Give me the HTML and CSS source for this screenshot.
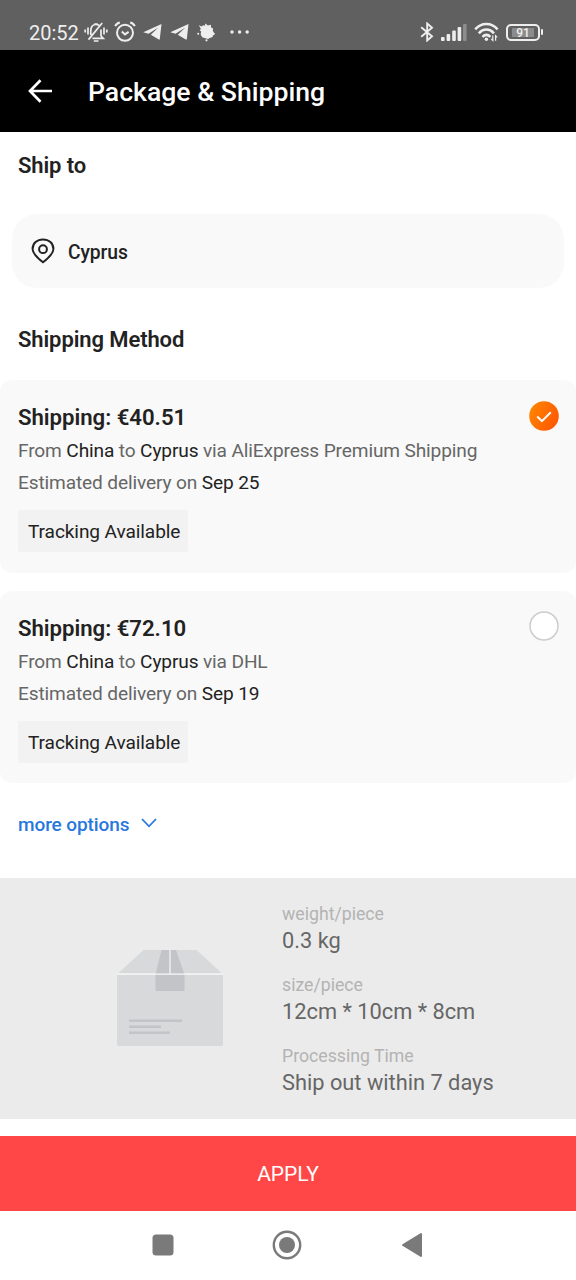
FILE: index.html
```html
<!DOCTYPE html>
<html lang="en">
<head>
<meta charset="utf-8">
<title>Package &amp; Shipping</title>
<link rel="stylesheet" href="styles.css">
</head>
<body>
<div class="status">
  <span class="clock">20:52</span>
  <svg class="i-bell" width="24" height="22" viewBox="0 0 24 22" fill="none" stroke="#eee" stroke-width="1.7">
    <path d="M6.800 14V9.500C7 5.500 8.600 3.500 12 3.500c1.500 0 2.500.4 3.300 1.100M17 8.500v6.500l2.300 2.400H8.500M10.200 3.200h3.600M4.500 18.600 18.200 2M9.800 20h4.700M4 6.500v7M1.200 8.500v3M20 6.500v7M22.800 8.500v3"/>
  </svg>
  <svg class="i-alarm" width="22" height="22" viewBox="0 0 22 22" fill="none" stroke="#eee" stroke-width="2">
    <circle cx="11" cy="11.800" r="8"/><path d="M7.800 10.500l3.200 2.900 3.600-2.500M1.200 5.200c.8-2 2.400-3.300 4.600-3.800M20.800 5.200c-.8-2-2.400-3.300-4.600-3.800"/>
  </svg>
  <svg class="i-plane" width="19" height="18" viewBox="0 0 19 18" fill="#eee"><path d="M18.500 1 .3 9.200l5.200 1.600L15.400 4.600 7.800 11.700l8 4.900q.8.300 1-.5z"/></svg>
  <svg class="i-plane" width="19" height="18" viewBox="0 0 19 18" fill="#eee"><path d="M18.500 1 .3 9.200l5.200 1.600L15.400 4.600 7.800 11.700l8 4.900q.8.300 1-.5z"/></svg>
  <svg class="i-leaf" width="19" height="19" viewBox="0 0 19 19" fill="#eee"><path d="M1.800 2.200 4.800 3.400 6 2.300 7.700 2.800 8.500.6l2.300 1.800 3-.6.3 2.800 2 .9-.3 2.300 1.600 2.600-1.400.9-.4 2.600-2.800 1-1.800 1-2.600-.7-3.200-1-1.600-3 .6-2.600-1.400-1.200 1-1.600z"/><circle cx="9.500" cy="17.300" r="1.100"/><circle cx="1.200" cy="10.700" r="1"/><path d="m14.500 9.500 3.500.8-1 2-3-.5z"/></svg>
  <svg class="i-dots" width="20" height="4" viewBox="0 0 20 4" fill="#eee"><circle cx="2" cy="2" r="1.700"/><circle cx="9.600" cy="2" r="1.700"/><circle cx="17.200" cy="2" r="1.700"/></svg>
  <div class="status-right">
    <svg width="14" height="20" viewBox="0 0 14 20" fill="none" stroke="#eee" stroke-width="1.900"><path d="M1.200 5.200 12 14.300 7.200 18.500V1.500L12 5.700 1.200 14.800"/></svg>
    <svg class="i-signal" width="26" height="17" viewBox="0 0 26 17" fill="#eee"><rect x="0" y="13" width="3.600" height="4" rx="1"/><rect x="5.600" y="10" width="3.600" height="7" rx="1"/><rect x="11.200" y="6.500" width="3.600" height="10.500" rx="1"/><rect x="16.600" y="3" width="3.600" height="14" rx="1"/><rect x="22" y="0" width="3.600" height="17" rx="1" fill="#8d8d8d"/></svg>
    <svg class="i-wifi" width="25" height="20" viewBox="0 0 25 20" fill="none" stroke="#eee" stroke-width="2.500"><path d="M1.200 7.300c6.200-7 16.200-7 22.400 0M4.800 11.300c4.400-5 10.800-5 15.200 0M8.400 14.800c2.500-2.500 5.500-2.500 8 0"/><circle cx="12.400" cy="17.200" r="1.700" fill="#eee" stroke="none"/><path stroke-width="1.200" d="M18.800 13.500v5l-1.600-1.600M21.600 18.700v-5l1.600 1.600"/></svg>
    <div class="battery"><span>91</span></div><i class="battery-cap"></i>
  </div>
</div>
<header class="header">
  <svg width="24" height="24" viewBox="0 0 24 24" fill="none" stroke="#fff" stroke-width="2.700"><path d="M12.500 1.200 2 12l10.500 10.800M2 12h22"/></svg>
  <h1>Package &amp; Shipping</h1>
</header>
<main>
  <h2 class="ship-to">Ship to</h2>
  <div class="country">
    <svg width="24" height="26" viewBox="0 0 24 26" fill="none" stroke="#222" stroke-width="2"><path d="M12 24.300C6.200 19.800 1.600 15.800 1.600 10.900 1.600 5.300 6 1.400 12 1.400s10.400 3.900 10.400 9.500c0 4.900-4.600 8.900-10.400 13.400z"/><circle cx="12" cy="11.200" r="3.900"/></svg>
    <span>Cyprus</span>
  </div>
  <h2 class="method">Shipping Method</h2>
  <section class="option">
    <div class="option-head"><h3>Shipping: €40.51</h3>
      <svg class="radio" width="30" height="30" viewBox="0 0 30 30"><defs><linearGradient id="orange" x1="0" y1="0" x2="1" y2="0.500"><stop offset="0" stop-color="#ff8a00"/><stop offset="1" stop-color="#ff5a00"/></linearGradient></defs><circle cx="15" cy="15" r="14.800" fill="url(#orange)"/><path d="m8.200 15.500 4.700 4.700 8.900-8.900" fill="none" stroke="#fff" stroke-width="2"/></svg>
    </div>
    <p>From <b>China</b> to <b>Cyprus</b> via AliExpress Premium Shipping</p>
    <p>Estimated delivery on <b>Sep 25</b></p>
    <span class="tag">Tracking Available</span>
  </section>
  <section class="option">
    <div class="option-head"><h3>Shipping: €72.10</h3>
      <svg class="radio" width="30" height="30" viewBox="0 0 30 30"><circle cx="15" cy="15" r="14" fill="#fff" stroke="#ccc" stroke-width="1.500"/></svg>
    </div>
    <p>From <b>China</b> to <b>Cyprus</b> via DHL</p>
    <p>Estimated delivery on <b>Sep 19</b></p>
    <span class="tag">Tracking Available</span>
  </section>
  <div class="more"><span>more options</span>
    <svg width="16" height="10" viewBox="0 0 16 10" fill="none" stroke="#2878dc" stroke-width="1.800"><path d="m1 1 7 7.300L15 1"/></svg>
  </div>
  <section class="package">
    <svg width="106" height="96" viewBox="0 0 106 96">
      <path d="M0 24.500h106V94q0 2-2 2H2q-2 0-2-2z" fill="#d8d9db"/>
      <path d="M26.500 0h53L105 23.500H1z" fill="#d8d9db"/>
      <path d="M44.500 0H59l8.500 24.500V41h-29V24.500z" fill="#c3c4c8"/>
      <path d="M0 24.200h106M53 0v24" fill="none" stroke="#f7f7f7" stroke-width="1.200"/>
      <path d="M12 70.700h53M12 76.700h32M12 82.700h41" stroke="#c3c4c8" stroke-width="2.400"/>
    </svg>
    <dl>
      <dt>weight/piece</dt><dd>0.3 kg</dd>
      <dt>size/piece</dt><dd>12cm * 10cm * 8cm</dd>
      <dt>Processing Time</dt><dd>Ship out within 7 days</dd>
    </dl>
  </section>
</main>
<button class="apply">APPLY</button>
<nav class="nav">
  <svg width="22" height="22" viewBox="0 0 22 22"><rect x=".5" y=".5" width="21" height="21" rx="3.500" fill="#7a7a7a"/></svg>
  <svg width="30" height="30" viewBox="0 0 30 30"><circle cx="15" cy="15" r="13.200" fill="none" stroke="#7a7a7a" stroke-width="2.400"/><circle cx="15" cy="15" r="8" fill="#7a7a7a"/></svg>
  <svg width="22" height="26" viewBox="0 0 22 26"><path d="M20 2v22L2 13z" fill="#7a7a7a" stroke="#7a7a7a" stroke-width="2" stroke-linejoin="round"/></svg>
</nav>
</body>
</html>
```
FILE: styles.css
```css
* { box-sizing: border-box; margin: 0; padding: 0; }
body { width: 576px; height: 1280px; background: #fff; color: #222; font-family: Roboto, sans-serif; overflow: hidden; }
svg { display: block; flex: none; }
.status { display: flex; align-items: center; height: 50px; padding: 14px 33px 0 29px; background: #606060; color: #eee; }
.clock { width: 55px; font-size: 20px; line-height: 36px; white-space: nowrap; padding-top: 2px; }
.i-alarm { margin-left: 6px; }
.i-plane { margin-left: 7px; }
.i-plane + .i-plane { margin-left: 8px; }
.i-leaf { margin-left: 8px; }
.i-dots { margin-left: 14px; }
.status-right { display: flex; align-items: center; margin-left: auto; }
.i-signal { margin-left: 7px; }
.i-wifi { margin-left: 7px; }
.battery { display: flex; width: 34px; height: 17px; margin-left: 7px; padding: 2px 4px; border: 2px solid #eee; border-radius: 5px; }
.battery span { flex: 1; background: #8b8b8b; font-size: 12px; font-weight: 500; line-height: 10px; text-align: center; }
.battery-cap { width: 2px; height: 6px; margin-left: 1px; background: #eee; border-radius: 1px; }
.header { display: flex; align-items: center; height: 82px; padding-left: 28px; gap: 36px; background: #000; color: #fff; }
.header h1 { font-size: 26.600px; font-weight: 500; line-height: 40px; padding-top: 2px; }
h2, h3 { font-weight: 600; }
h2 { padding-left: 18px; font-size: 22px; line-height: 34px; letter-spacing: -0.1px; }
.ship-to { padding-top: 17px; height: 82px; }
.country { display: flex; align-items: center; gap: 13px; height: 74px; margin: 0 12px; padding-left: 19px; background: #f9f9f9; border-radius: 25px; font-size: 19.300px; font-weight: 500; letter-spacing: -0.1px; }
.country span { padding-top: 2px; }
.method { height: 92px; padding-top: 35px; }
.option { height: 193px; padding: 20px 18px 0; background: #f9f9f9; border-radius: 12px; }
.option + .option { height: 192px; margin-top: 18px; }
.option-head { display: flex; justify-content: space-between; height: 35px; }
.option h3 { font-size: 22.200px; line-height: 34px; letter-spacing: -0.030px; }
.option p { font-size: 19.100px; line-height: 32px; letter-spacing: -0.130px; color: #666; white-space: nowrap; }
.option b { font-weight: 400; color: #222; }
.tag { display: inline-block; width: 170px; height: 42px; margin-top: 11px; padding-left: 10px; background: #f2f2f2; border-radius: 2px; font-size: 19.100px; line-height: 44px; letter-spacing: -0.100px; white-space: nowrap; }
.radio { margin: 1px -1px 0 0; }
.option + .option .radio { margin-top: 0; }
.more { display: flex; align-items: center; height: 95px; padding: 0 0 12px 18px; gap: 12px; color: #2878dc; font-size: 19px; font-weight: 500; letter-spacing: -0.100px; }
.more svg { margin-bottom: 3px; }
.package { display: flex; height: 241px; padding-left: 117px; background: #ebebeb; }
.package svg { margin-top: 72px; }
.package dl { margin: 23px 0 0 59px; }
dt { font-size: 17.700px; line-height: 26px; color: #b3b3b3; }
dd { margin-bottom: 18px; font-size: 21.800px; line-height: 27px; color: #666; }
.apply { display: block; width: 100%; height: 75px; margin-top: 17px; padding-top: 1px; border: 0; background: #ff4747; color: #fff; font: 400 21px Roboto, sans-serif; }
.nav { display: flex; align-items: center; height: 69px; padding: 0 0 1px 152px; }
.nav svg:nth-child(2) { margin-left: 98px; }
.nav svg:nth-child(3) { margin-left: 99px; }
```
